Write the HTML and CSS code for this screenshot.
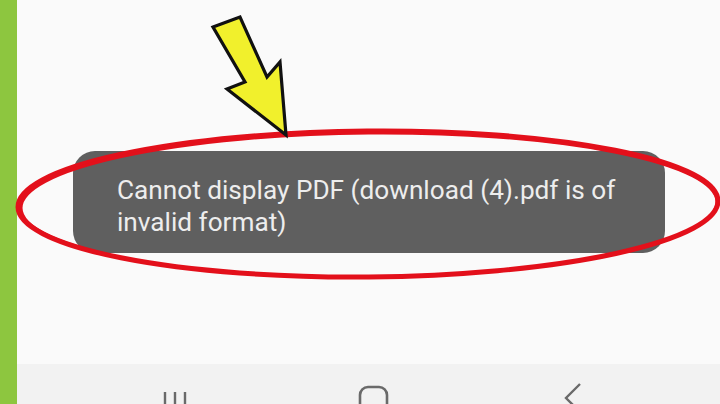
FILE: index.html
```html
<!DOCTYPE html>
<html lang="en">
<head>
<meta charset="utf-8">
<title>Cannot display PDF</title>
<link rel="stylesheet" href="styles.css">
</head>
<body>
<div class="screen">
  <div class="edge"></div>
  <div class="main">
    <div class="content">
      <div class="toast">Cannot display PDF (download (4).pdf is of invalid format)</div>
    </div>
    <nav class="navbar">
      <svg class="nav-icon" width="30" height="20" viewBox="0 0 30 20"><path d="M5 8v14M15 8v14M25 8v14" stroke="#6a6a6a" stroke-width="2.4" fill="none"/></svg>
      <svg class="nav-icon" width="30" height="20" viewBox="0 0 30 20"><rect x="2" y="3" width="27" height="27" rx="8" stroke="#6a6a6a" stroke-width="2.6" fill="none"/></svg>
      <svg class="nav-icon" width="30" height="20" viewBox="0 0 30 20"><path d="M24 0L10 14L24 28" stroke="#6a6a6a" stroke-width="2.4" fill="none"/></svg>
    </nav>
  </div>
  <svg class="annot" width="720" height="404" viewBox="0 0 720 404">
    <ellipse cx="368" cy="204" rx="350" ry="73" transform="rotate(-0.5 368 204)" fill="none" stroke="#e3101b" stroke-width="5"/>
    <ellipse cx="369" cy="205" rx="348" ry="72" transform="rotate(-0.5 368 204)" fill="none" stroke="#e3101b" stroke-width="3"/>
    <polygon points="213,27 240,17 267,77 280,62 286,135 227,89 245,82" fill="#f1f02c" stroke="#111" stroke-width="3.2" stroke-linejoin="miter"/>
  </svg>
</div>
</body>
</html>
```
FILE: styles.css
```css
html, body {
  margin: 0;
  padding: 0;
}
body {
  width: 720px;
  height: 404px;
  overflow: hidden;
  font-family: Roboto, "Liberation Sans", sans-serif;
}
.screen {
  position: relative;
  display: flex;
  width: 720px;
  height: 404px;
}
.edge {
  width: 17px;
  flex: none;
  background: #8dc63f;
}
.main {
  flex: 1;
  display: flex;
  flex-direction: column;
}
.content {
  height: 364px;
  background: #fafafa;
  padding: 151px 0 0 56px;
  box-sizing: border-box;
}
.toast {
  width: 592px;
  height: 102px;
  box-sizing: border-box;
  padding: 23px 40px 0 44px;
  background: #5f5f5f;
  border-radius: 22px;
  color: #ededed;
  font-size: 26.2px;
  line-height: 32px;
}
.navbar {
  flex: 1;
  background: #f2f2f2;
  display: flex;
  align-items: flex-start;
  gap: 168px;
  padding: 20px 0 0 143px;
  overflow: hidden;
}
.nav-icon {
  display: block;
  flex: none;
  overflow: visible;
}
.annot {
  position: absolute;
  left: 0;
  top: 0;
  pointer-events: none;
}
```
